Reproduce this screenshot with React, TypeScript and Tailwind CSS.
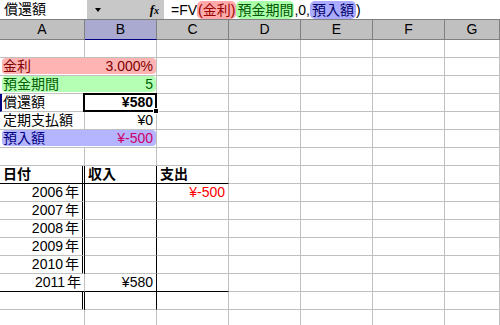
import React from "react";

const font = { fontFamily: '"Liberation Sans", "Noto Sans CJK JP", sans-serif' };

const cols = "grid grid-cols-[85px_72px_72px_72px_72px_72px_55px]";
const cell = "h-[18px] border-r border-b border-[#c0c0c0] px-[3px] leading-[17px] whitespace-nowrap overflow-visible";

const Cell = ({ children, className = "" }: { children?: React.ReactNode; className?: string }) => (
  <div className={`${cell} ${className}`}>{children}</div>
);

const Blank = ({ n }: { n: number }) => (
  <>
    {Array.from({ length: n }).map((_, i) => (
      <Cell key={i} />
    ))}
  </>
);

const Mark = ({ bg, children }: { bg: string; children: React.ReactNode }) => (
  <div className="col-span-2 h-[18px] border-r border-b border-[#c0c0c0] pl-[2px]">
    <div className={`flex h-[16px] items-center justify-between rounded-[4px] px-[1px] leading-[16px] ${bg}`}>
      {children}
    </div>
  </div>
);

const Year = ({ y, double = true, last = false }: { y: string; double?: boolean; last?: boolean }) => (
  <div className={`${cols}`}>
    <Cell
      className={`text-right ${double ? "border-r-[3px] border-double border-r-black" : ""} ${last ? "border-b-black" : ""}`}
    >
      {y}
      <span className="ml-[2px]">年</span>
    </Cell>
    <Cell className={`text-right border-r-black ${last ? "border-b-black" : ""}`}>{last ? "¥580" : ""}</Cell>
    <Cell className={`text-right text-[#ff0000] ${last ? "border-b-black" : ""}`}>{y === "2006" ? "¥-500" : ""}</Cell>
    <Blank n={4} />
  </div>
);

export default function App() {
  return (
    <div className="h-[325px] w-[500px] overflow-hidden bg-white text-[14px] text-black" style={font}>
      {/* name box + formula bar */}
      <div className="flex h-[20px] border-b border-[#808080] bg-[#c8c8c8]">
        <div className="h-[19px] w-[87px] bg-white pl-[4px] text-[14px] leading-[19px]">償還額</div>
        <div className="relative flex w-[77px] items-center">
          <span className="ml-[8px] h-0 w-0 border-x-[3px] border-t-[4px] border-x-transparent border-t-black" />
          <span
            className="ml-auto mr-[5px] text-[13px] italic font-bold"
            style={{ fontFamily: '"Liberation Serif", serif' }}
          >
            f<span className="text-[10px]">x</span>
          </span>
        </div>
        <div className="flex h-[19px] flex-1 items-center bg-white pl-[7px] text-[14px] leading-[18px]">
          <span>=FV</span>
          <span className="rounded-[5px] bg-[#ffaaaa] px-[1px] text-[#990000]">(金利)</span>
          <span className="rounded-[5px] bg-[#aaffaa] px-[1px] text-[#005500]">預金期間</span>
          <span>,0,</span>
          <span className="rounded-[5px] bg-[#aaaaff] px-[2px] text-[#000066]">預入額</span>
          <span>)</span>
        </div>
      </div>

      {/* column headers */}
      <div className={`${cols} h-[20px] text-[14px] leading-[19px]`}>
        {["A", "B", "C", "D", "E", "F", "G"].map((c) => (
          <div
            key={c}
            className={`border-r border-b border-[#808080] text-center ${
              c === "B" ? "bg-[#aaaad0] border-b-[#000080]" : "bg-[#c0c0c0]"
            }`}
          >
            {c}
          </div>
        ))}
      </div>

      {/* row 1 */}
      <div className={cols}>
        <Blank n={7} />
      </div>
      {/* 金利 */}
      <div className={cols}>
        <Mark bg="bg-[#ffb4b4]">
          <span className="text-[#800000]">金利</span>
          <span className="pr-[2px] text-[#800000]">3.000%</span>
        </Mark>
        <Blank n={5} />
      </div>
      {/* 預金期間 */}
      <div className={cols}>
        <Mark bg="bg-[#b4ffb4]">
          <span className="text-[#006000]">預金期間</span>
          <span className="pr-[2px] text-[#006000]">5</span>
        </Mark>
        <Blank n={5} />
      </div>
      {/* 償還額 */}
      <div className={cols}>
        <Cell className="border-l-2 border-l-[#000080] pl-[1px]">償還額</Cell>
        <div className={`${cell} relative text-right font-bold`}>
          ¥580
          <div className="absolute -left-[2px] -top-[1px] -right-[1px] -bottom-[1px] z-10 border-2 border-black" />
          <div className="absolute -right-[3px] -bottom-[3px] z-20 h-[6px] w-[6px] border border-white bg-black" />
        </div>
        <Blank n={5} />
      </div>
      {/* 定期支払額 */}
      <div className={cols}>
        <Cell>定期支払額</Cell>
        <Cell className="text-right">¥0</Cell>
        <Blank n={5} />
      </div>
      {/* 預入額 */}
      <div className={cols}>
        <Mark bg="bg-[#b4b4ff]">
          <span className="text-[#000080]">預入額</span>
          <span className="pr-[2px] text-[#cc0066]">¥-500</span>
        </Mark>
        <Blank n={5} />
      </div>
      {/* row 7 */}
      <div className={cols}>
        <Blank n={7} />
      </div>

      {/* table header */}
      <div className={cols}>
        <Cell className="border-r-[3px] border-double border-r-black border-b-black font-bold">日付</Cell>
        <Cell className="border-r-black border-b-black font-bold">収入</Cell>
        <Cell className="border-b-black font-bold">支出</Cell>
        <Blank n={4} />
      </div>
      <Year y="2006" />
      <Year y="2007" />
      <Year y="2008" />
      <Year y="2009" />
      <Year y="2010" />
      <Year y="2011" double={false} last />
      <div className={cols}>
        <Cell className="border-r-[3px] border-double border-r-black" />
        <Cell className="border-r-black" />
        <Blank n={5} />
      </div>
      <div className={cols}>
        <Blank n={7} />
      </div>
    </div>
  );
}
